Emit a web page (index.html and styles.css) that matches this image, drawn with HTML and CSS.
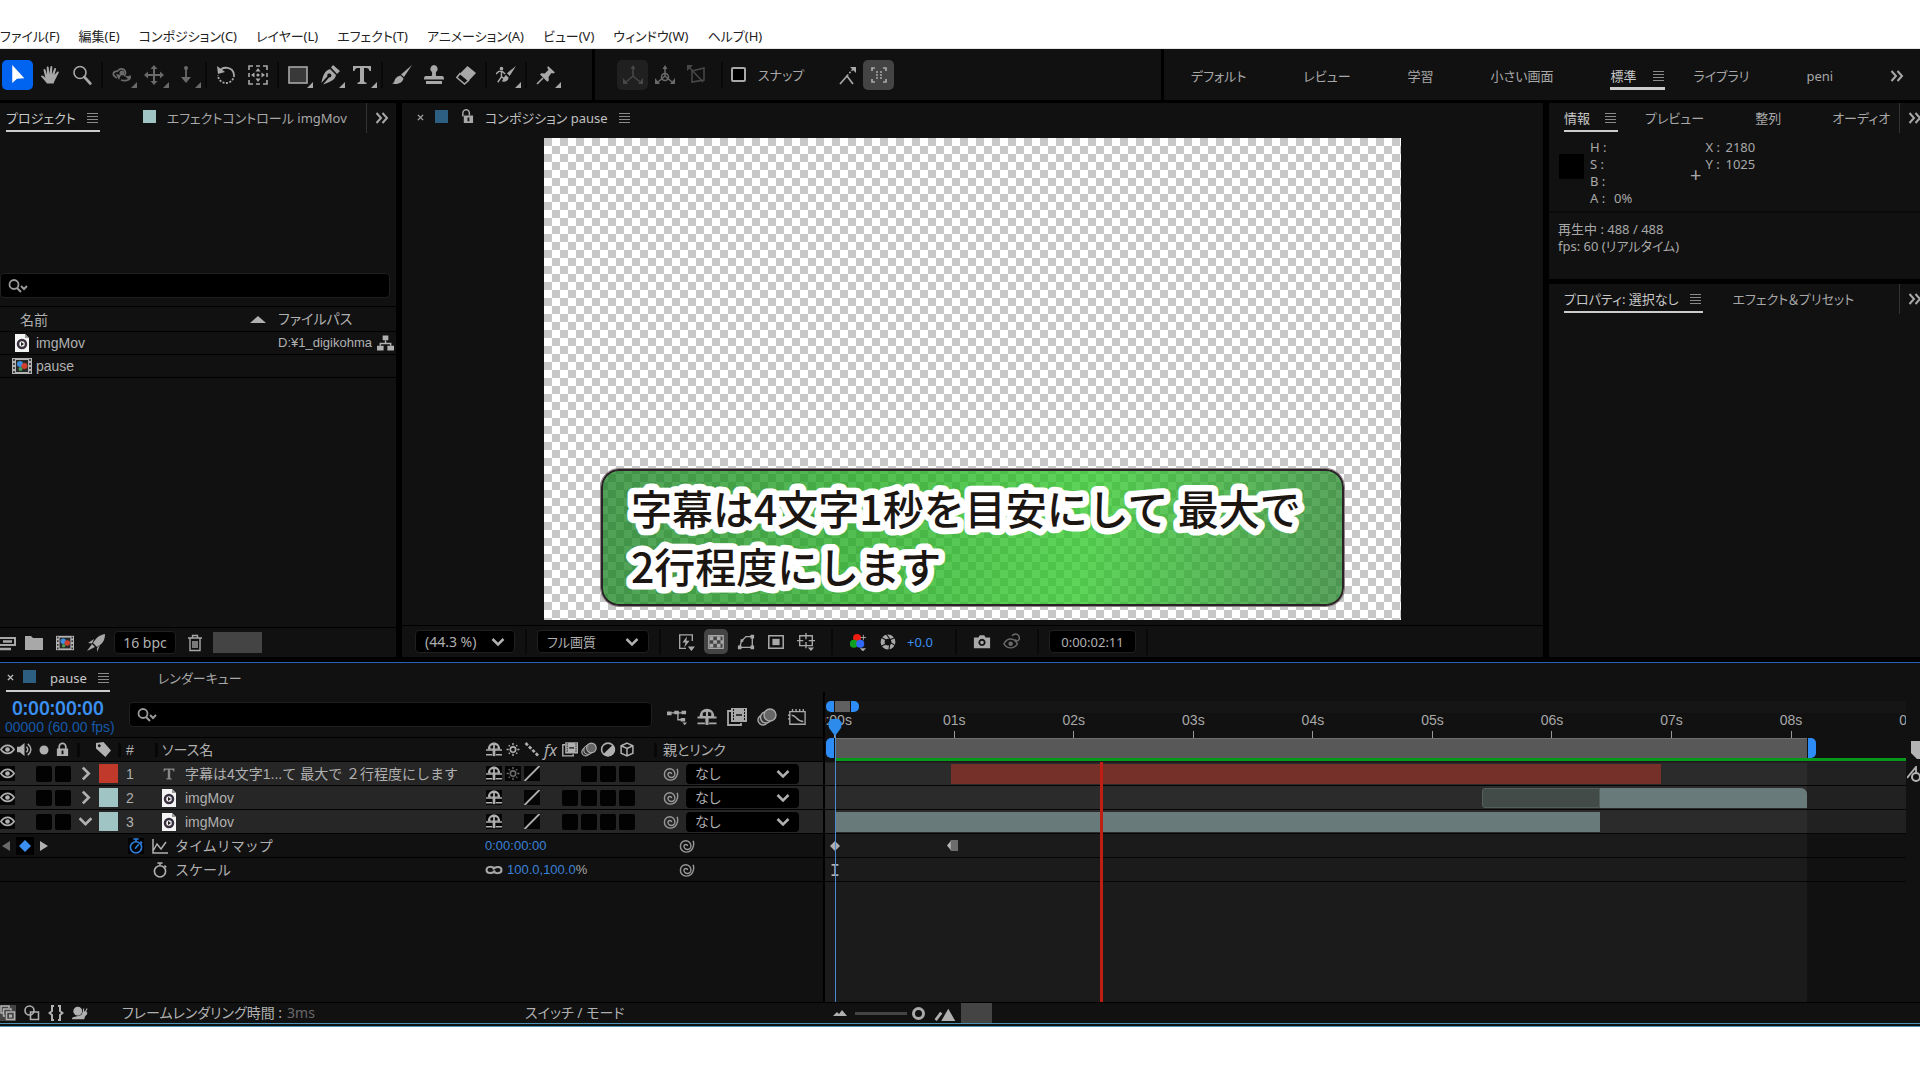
FILE: index.html
```html
<!DOCTYPE html>
<html lang="ja">
<head>
    <meta charset="UTF-8">
    <meta name="viewport" content="width=device-width, initial-scale=1.0">
    <title>pause</title>
    <link rel="stylesheet" href="styles.css">
</head>
<body>

<svg class="defs" aria-hidden="true">
    <symbol id="i-arrow" viewBox="0 0 20 20"><path fill="currentColor" d="M5 1v17l4.500-4 7-.5z"/></symbol>
    <symbol id="i-hand" viewBox="0 0 20 20"><path fill="currentColor" d="M7 18.500C5 16 3 13.500.8 11.200c.8-1.200 2-.8 3.200.3L5.300 12.700 3.500 5c0-1.300 1.500-1.400 1.900-.3L7 9.500 6.700 2.500c0-1.400 1.800-1.400 2 0L9.400 9l1-7.300c.3-1.200 2-1 1.900.4L11.900 9.400l2.400-5.800c.6-1.100 2-.5 1.700.7L14.400 10l2.800-3.200c.9-.8 2 .1 1.400 1.100-1.500 2.500-2.600 5.500-4.100 8.100l-.9 2.500z"/></symbol>
    <symbol id="i-zoom" viewBox="0 0 20 20"><circle cx="8" cy="7.500" r="6" fill="none" stroke="currentColor" stroke-width="1.600"/><path d="M12.300 12l6 6.500" stroke="currentColor" stroke-width="2.600" stroke-linecap="round"/></symbol>
    <symbol id="i-orbit" viewBox="0 0 20 20"><g fill="none" stroke="currentColor" stroke-width="1.700"><path d="M5 13C-1 10 1 6 6 6.200M9 15c6 2 11-1 8.500-4.500"/><path d="M6 6a4 4 0 1 1 6 5"/></g><path fill="currentColor" d="M4 9l5 1-2 5zM13 11h6l-2 4z"/><circle cx="10" cy="8" r="2.500" fill="currentColor"/></symbol>
    <symbol id="i-pan" viewBox="0 0 20 20"><path d="M10 3v14M3 10h14" stroke="currentColor" stroke-width="2"/><path fill="currentColor" d="M10 0l3.500 4h-7zM10 20l3.500-4h-7zM0 10l4-3.500v7zM20 10l-4-3.500v7z"/></symbol>
    <symbol id="i-dolly" viewBox="0 0 20 20"><circle cx="10" cy="3" r="2" fill="currentColor"/><path d="M10 3v11" stroke="currentColor" stroke-width="1.800"/><path fill="currentColor" d="M5 12h10l-5 6z"/></symbol>
    <symbol id="i-rotate" viewBox="0 0 20 20"><path d="M3 7A8 8 0 0 1 18 10" fill="none" stroke="currentColor" stroke-width="1.800"/><path d="M18 10A8 8 0 0 1 2 10" fill="none" stroke="currentColor" stroke-width="1.800" stroke-dasharray="2 1.500"/><path fill="currentColor" d="M1 1l1 8 7-2z"/></symbol>
    <symbol id="i-anchor" viewBox="0 0 20 20"><path d="M1 5V1h4M8 1h4M15 1h4v4M19 8v4M19 15v4h-4M12 19H8M5 19H1v-4M1 12V8" fill="none" stroke="currentColor" stroke-width="1.600"/><path fill="currentColor" d="M10 3l2.500 3.500h-5zM10 17l2.500-3.500h-5zM3 10l3.500-2.500v5zM17 10l-3.500-2.500v5z"/><circle cx="10" cy="10" r="1.600" fill="currentColor"/></symbol>
    <symbol id="i-rect" viewBox="0 0 20 20"><rect x="1" y="2" width="18" height="16" fill="#393939" stroke="currentColor" stroke-width="1.600"/></symbol>
    <symbol id="i-pen" viewBox="0 0 20 20"><path fill="currentColor" fill-rule="evenodd" d="M13 0l7 6-3 3-6-6.500zM10 4l6 6c-1 5-5 6.500-13 9.500l6-7a2 2 0 1 0-1.500-1.300L1.300 18C3 11 4 6 10 4z"/></symbol>
    <symbol id="i-type" viewBox="0 0 20 20"><path fill="currentColor" d="M1 1h18v5h-1.500C17 3.500 16 3 12 3v12.500c0 1.500 1 2 2.500 2V19h-9v-1.500C7 17.500 8 17 8 15.500V3C4 3 3 3.500 2.500 6H1z"/></symbol>
    <symbol id="i-brush" viewBox="0 0 20 20"><path fill="currentColor" d="M20 0L12 12 9 9.500zM8.500 10.500l3 2.700C11 17.500 6 20 0 18.500c3-1 2-3 3.500-5 1.300-1.700 3-2.300 5-3z"/></symbol>
    <symbol id="i-stamp" viewBox="0 0 20 20"><path fill="currentColor" d="M10 0a3.800 3.800 0 0 1 2.500 6.500c-1 1-.7 3.500-.2 4.500H18c1.500 0 2 1 2 3.500H0C0 12 .5 11 2 11h5.700c.5-1 .8-3.500-.2-4.500A3.800 3.800 0 0 1 10 0zM2 16h16v3H2z"/></symbol>
    <symbol id="i-eraser" viewBox="0 0 20 20"><path fill="currentColor" d="M11.500 1L20 8l-7.500 8L4 8.500z"/><path d="M4 8.500L.8 12.500 8.500 19l4-3.500z" fill="none" stroke="currentColor" stroke-width="1.500"/></symbol>
    <symbol id="i-roto" viewBox="0 0 22 20"><path fill="currentColor" d="M22 0l-7 11-3-3zM11 10l3 3c-1 4-4 5-8 4 2-1 2-5 5-7z"/><circle cx="6" cy="3" r="2" fill="currentColor"/><path d="M0 9l3-3h4l3 3M6 6v6l-4 6M6 12l3 2" fill="none" stroke="currentColor" stroke-width="1.600"/></symbol>
    <symbol id="i-pin" viewBox="0 0 20 20"><path fill="currentColor" d="M12 1l7 6.500-2 1-1.500-.5-3 4 .3 3.500-1.500 1.200L4 9.500l1.300-1.300 3.500.2 3.700-3.600L11.300 3z"/><path d="M7 13l-6 6" stroke="currentColor" stroke-width="1.600"/></symbol>
    <symbol id="i-axis" viewBox="0 0 20 20"><path d="M10 2v9l-7 6M10 11l7 6" fill="none" stroke="currentColor" stroke-width="1.500"/><path fill="currentColor" d="M10 0l2.500 4h-5zM0 19v-6l5 6zM20 19v-6l-5 6z"/></symbol>
    <symbol id="i-axis-world" viewBox="0 0 20 20"><use href="#i-axis"/><circle cx="10" cy="12" r="3.500" fill="none" stroke="currentColor" stroke-width="1.500"/></symbol>
    <symbol id="i-axis-view" viewBox="0 0 20 20"><path d="M2 2l14 15M5 6l12-3v12L5 17z" fill="none" stroke="currentColor" stroke-width="1.500"/><path fill="currentColor" d="M0 0h6L0 6z"/></symbol>
    <symbol id="i-snap" viewBox="0 0 20 20"><path d="M3 19l7-8 6 8" fill="none" stroke="currentColor" stroke-width="1.700"/><path d="M10 11l6-7" stroke="currentColor" stroke-width="1.500" stroke-dasharray="2 1.500"/><path fill="currentColor" d="M13 2h6v6z"/></symbol>
    <symbol id="i-snapbox" viewBox="0 0 20 20"><path d="M3 6V3h3M14 3h3v3M17 14v3h-3M6 17H3v-3" fill="none" stroke="currentColor" stroke-width="1.700"/><path d="M7 7h2M11 7h2M7 10h2M11 10h2M7 13h2M11 13h2" stroke="currentColor" stroke-width="1.500"/></symbol>
    <symbol id="i-menu" viewBox="0 0 12 12"><path d="M0 1.500h11M0 4.500h11M0 7.500h11M0 10.500h11" stroke="currentColor"/></symbol>
    <symbol id="i-more" viewBox="0 0 14 12"><path d="M1.500 1l4.500 5-4.500 5M7.500 1L12 6l-4.500 5" fill="none" stroke="currentColor" stroke-width="2"/></symbol>
    <symbol id="i-x" viewBox="0 0 8 8"><path d="M1 1l6 6M7 1L1 7" stroke="currentColor" stroke-width="1.500"/></symbol>
    <symbol id="i-unlock" viewBox="0 0 14 16"><path fill="currentColor" fill-rule="evenodd" d="M3 7h10v8H3zM7 9v4h2V9z"/><path d="M2 8V4.500a3.500 3.500 0 0 1 7-.5v3" fill="none" stroke="currentColor" stroke-width="1.600"/></symbol>
    <symbol id="i-lock" viewBox="0 0 14 16"><path fill="currentColor" fill-rule="evenodd" d="M1 7h12v8H1zM6 9v4h2V9z"/><path d="M3.500 8V5a3.500 3.500 0 0 1 7 0v3" fill="none" stroke="currentColor" stroke-width="1.800"/></symbol>
    <symbol id="i-search" viewBox="0 0 20 14"><circle cx="6" cy="5.500" r="4.500" fill="none" stroke="currentColor" stroke-width="1.800"/><path d="M9 9l4 4M13 7l3 3 3-3" fill="none" stroke="currentColor" stroke-width="2"/></symbol>
    <symbol id="i-chev" viewBox="0 0 14 10"><path d="M1.500 2L7 7.500 12.500 2" fill="none" stroke="currentColor" stroke-width="2.500"/></symbol>
    <symbol id="i-right" viewBox="0 0 14 14"><path d="M4.500 1.500L10 7l-5.500 5.500" fill="none" stroke="currentColor" stroke-width="2.500"/></symbol>
    <symbol id="i-up" viewBox="0 0 16 8"><path fill="currentColor" d="M8 0l8 7H0z"/></symbol>
    <symbol id="i-mov" viewBox="0 0 14 18"><path fill="#f4f4f4" d="M0 0h10l4 4v14H0z"/><path fill="#999" d="M10 0v4h4z"/><circle cx="7" cy="10" r="4" fill="#f4f4f4" stroke="#3a3040" stroke-width="2.500"/><path fill="#222" d="M6 8v4l3-2z"/></symbol>
    <symbol id="i-comp" viewBox="0 0 20 16"><path fill="#b4b4b4" d="M0 0h20v16H0z"/><path d="M2 1v15M18 1v15" stroke="#222" stroke-width="1.500" stroke-dasharray="2 2"/><path fill="#282828" d="M4 2h12v12H4z"/><circle cx="8" cy="6" r="3" fill="#3c8ee0"/><circle cx="12.500" cy="8" r="3" fill="#d0402c"/><circle cx="8.500" cy="11" r="2" fill="#4a9a58"/></symbol>
    <symbol id="i-tree" viewBox="0 0 18 16"><path fill="currentColor" d="M6 0h6v5H6zM0 11h7v5H0zM11 11h7v5h-7z"/><path d="M9 5v3.500M3.500 11V8.500h11V11" fill="none" stroke="currentColor" stroke-width="1.500"/></symbol>
    <symbol id="i-interpret" viewBox="0 0 18 18"><path d="M0 4h15v7H0" fill="none" stroke="currentColor" stroke-width="2"/><path d="M3 7.500h9M0 15h11" fill="none" stroke="currentColor" stroke-width="2.500"/></symbol>
    <symbol id="i-folder" viewBox="0 0 18 14"><path fill="currentColor" d="M0 0h6l2 2h10v12H0z"/></symbol>
    <symbol id="i-rocket" viewBox="0 0 18 18"><path fill="currentColor" d="M18 0c0 7-3 10-8 13l-4-4C9 4 12 1 18 0zM5 10l3 3-8 4zM7 5L1 9l4 .5zM13 11l-3 3v4z"/></symbol>
    <symbol id="i-trash" viewBox="0 0 14 18"><path d="M0 4h14M4.500 4V1.500h5V4M2 4v12.500h10V4M5 7v7M7 7v7M9 7v7" fill="none" stroke="currentColor" stroke-width="1.400"/></symbol>
    <symbol id="i-fast" viewBox="0 0 20 20"><path d="M17 9V2H3v15h7" fill="none" stroke="currentColor" stroke-width="1.500"/><path fill="currentColor" d="M11 4l-5 6.500h3.500L8 16l6-7.500h-3.500zM12 15h8l-4 5z"/></symbol>
    <symbol id="i-checker" viewBox="0 0 20 20"><path d="M2 3h16v14H2z" fill="none" stroke="currentColor" stroke-width="1.500"/><path fill="currentColor" d="M3 4h4v4H3zM11 4h4v4h-4zM7 8h4v4H7zM15 8h3v4h-3zM3 12h4v4H3zM11 12h4v4h-4z"/></symbol>
    <symbol id="i-mask" viewBox="0 0 20 20"><path d="M3 16l2-7 5-5h7v12z" fill="none" stroke="currentColor" stroke-width="1.500"/><path fill="currentColor" d="M1 14h4v4H1zM15 14h4v4h-4zM15 2h4v4h-4zM4 7h3v3H4z"/></symbol>
    <symbol id="i-roi" viewBox="0 0 20 20"><path d="M2 3h16v14H2z" fill="none" stroke="currentColor" stroke-width="1.700"/><path fill="currentColor" d="M6 6.500h8v7H6z"/></symbol>
    <symbol id="i-guides" viewBox="0 0 20 20"><path d="M3 3h14v11H3zM10 0v7M10 10v7M0 8.500h7M13 8.500h7" fill="none" stroke="currentColor" stroke-width="1.500"/><path fill="currentColor" d="M12 16h7l-3.500 4z"/></symbol>
    <symbol id="i-rgb" viewBox="0 0 20 20"><circle cx="9" cy="5.500" r="4.500" fill="#f01c10"/><circle cx="5.500" cy="12" r="4.500" fill="#10a020"/><circle cx="12.500" cy="12" r="4.500" fill="#3268f8"/><path d="M16 2v6M13 5h6" stroke="#aaa"/><path fill="currentColor" d="M12 17h7l-3.500 3.500z"/></symbol>
    <symbol id="i-shutter" viewBox="0 0 20 20"><circle cx="10" cy="10" r="6" fill="none" stroke="currentColor" stroke-width="4.500"/><path d="M8 1l5 7M18 5l-7 3M18 14l-6-4M11 19l1-7M2 15l6-3M3 5l5 3" stroke="#111" stroke-width="1.200"/></symbol>
    <symbol id="i-camera" viewBox="0 0 20 20"><path fill="currentColor" fill-rule="evenodd" d="M1 5h5l1.500-2.500h5L14 5h5v12H1zM10 6.500a4 4 0 1 0 .01 0zM10 8.500a2 2 0 1 1-.01 0z"/></symbol>
    <symbol id="i-show" viewBox="0 0 20 20"><path d="M1 12c4-7 11-7 15 0-4 6-11 6-15 0z" fill="none" stroke="currentColor" stroke-width="1.600"/><circle cx="8.500" cy="12" r="2.500" fill="currentColor"/><path d="M10 3c4-4 9-1 8 4-2 3-4 2-4 0" fill="none" stroke="currentColor" stroke-width="1.600"/></symbol>
    <symbol id="i-flow" viewBox="0 0 22 18"><path fill="currentColor" d="M0 3h5v4H0zM8 2h5v4H8zM16 2h5v4h-5zM15 10h5v4h-5zM17 15h5l-2.500 3z"/><path d="M2 4.500h17M12 5v7h4" fill="none" stroke="currentColor" stroke-width="1.500"/></symbol>
    <symbol id="i-shy" viewBox="0 0 18 17"><path fill="currentColor" fill-rule="evenodd" d="M2 8.500C2-2 16-2 16 8.500zM5 4.500v3h3v-4zM10 3.500v4h3v-3z"/><path d="M0 9h18M0 14.500h7M11 14.500h7" stroke="currentColor" stroke-width="1.800"/><path d="M9 8v8" stroke="currentColor" stroke-width="3"/></symbol>
    <symbol id="i-blend" viewBox="0 0 20 18"><path d="M4 3H1v14h13v-2" fill="none" stroke="currentColor" stroke-width="1.800"/><path fill="currentColor" d="M4 0h16v14H4z"/><path d="M6.500 1v12M17.500 1v12" stroke="#111" stroke-dasharray="2 1"/><path d="M9 7h6" stroke="#111" stroke-width="1.500"/></symbol>
    <symbol id="i-blur" viewBox="0 0 20 18"><g fill="#333" stroke="currentColor" stroke-width="1.400"><circle cx="6" cy="12" r="5"/><circle cx="9" cy="9.500" r="5.500"/><circle cx="13" cy="7" r="6" fill="#666"/></g></symbol>
    <symbol id="i-graph" viewBox="0 0 20 20"><path d="M2 4h17v14H2zM5 1v3M9 1v3M13 1v3M17 1v3M0 8h2M0 12h2" fill="none" stroke="currentColor" stroke-width="1.500"/><path d="M4 8c6 0 5 7 13 7" fill="none" stroke="currentColor" stroke-width="1.500"/></symbol>
    <symbol id="i-eye" viewBox="0 0 16 12"><path d="M1 6c3.500-6 10.500-6 14 0-3.500 5.500-10.500 5.500-14 0z" fill="none" stroke="currentColor" stroke-width="1.800"/><circle cx="8" cy="6" r="2.500" fill="currentColor"/></symbol>
    <symbol id="i-audio" viewBox="0 0 16 14"><path fill="currentColor" d="M0 4h3l5-4v14l-5-4H0z"/><path d="M10 4c2 2 2 4 0 6M11.500 1c4.500 4 4.500 8 0 12" fill="none" stroke="currentColor" stroke-width="1.500"/></symbol>
    <symbol id="i-dot" viewBox="0 0 10 10"><circle cx="5" cy="5" r="4.500" fill="currentColor"/></symbol>
    <symbol id="i-tag" viewBox="0 0 16 16"><path fill="currentColor" fill-rule="evenodd" d="M0 1l8-1 8 9-6 7-10-9zM3.500 2.500a1.500 1.500 0 1 0 .01 0z"/></symbol>
    <symbol id="i-sun" viewBox="0 0 14 14"><circle cx="7" cy="7" r="2.500" fill="none" stroke="currentColor" stroke-width="1.500"/><path d="M7 1v2M7 11v2M1 7h2M11 7h2M3 3l1 1M10 10l1 1M11 3l-1 1M4 10l-1 1" stroke="currentColor" stroke-width="1.300"/></symbol>
    <symbol id="i-quality" viewBox="0 0 14 14"><path d="M1 1l12 12" stroke="currentColor" stroke-width="2.500" stroke-dasharray="3 1.500"/></symbol>
    <symbol id="i-slash" viewBox="0 0 14 14"><path d="M0 14L14 0" stroke="currentColor" stroke-width="1.800"/></symbol>
    <symbol id="i-adjust" viewBox="0 0 14 14"><circle cx="7" cy="7" r="6" fill="none" stroke="currentColor" stroke-width="1.500"/><path fill="currentColor" d="M11.500 2.500a6 6 0 0 1-9 9z"/></symbol>
    <symbol id="i-cube" viewBox="0 0 14 14"><path d="M7 1l5.500 2.500v7L7 13l-5.500-2.500v-7zM1.500 3.500L7 6l5.500-2.500M7 6v7" fill="none" stroke="currentColor" stroke-width="1.400"/></symbol>
    <symbol id="i-whip" viewBox="0 0 18 16"><path d="M16 2C18 8 15 15 8 15A6.500 6.500 0 0 1 1.500 8A6 6 0 0 1 13.500 8A3.800 3.800 0 0 1 5.500 8A2.200 2.200 0 0 1 9.800 8" fill="none" stroke="currentColor" stroke-width="1.600"/></symbol>
    <symbol id="i-left" viewBox="0 0 8 10"><path fill="currentColor" d="M8 0v10L0 5z"/></symbol>
    <symbol id="i-play" viewBox="0 0 8 10"><path fill="currentColor" d="M0 0v10l8-5z"/></symbol>
    <symbol id="i-key" viewBox="0 0 12 12"><path fill="currentColor" d="M6 0l6 6-6 6-6-6z"/></symbol>
    <symbol id="i-watch" viewBox="0 0 16 18"><circle cx="8" cy="10.500" r="6.300" fill="none" stroke="currentColor" stroke-width="1.800"/><path d="M5 1.200h6M8 1v3M13 4l2 2" stroke="currentColor" stroke-width="1.800"/></symbol>
    <symbol id="i-watch-on" viewBox="0 0 16 18"><use href="#i-watch"/><path d="M7 12l4-5" stroke="currentColor" stroke-width="1.800"/></symbol>
    <symbol id="i-curve" viewBox="0 0 16 16"><path d="M1 1v14h15M1 13l4-7 4 5 5-7" fill="none" stroke="currentColor" stroke-width="1.500"/></symbol>
    <symbol id="i-link" viewBox="0 0 18 10"><path d="M10 5.500C8 9 1.500 9 1.500 5S8 1 10 4M8 4.500C10 1 16.500 1 16.500 5S10 9 8 6" fill="none" stroke="currentColor" stroke-width="2"/></symbol>
    <symbol id="i-layers" viewBox="0 0 16 16"><path d="M3 8H1V1h8v2M5 11H3.500V4H11v1.500M6.500 7h8v7.500h-8z" fill="none" stroke="currentColor" stroke-width="1.500"/><path fill="currentColor" d="M9 9.500h3v3H9z"/></symbol>
    <symbol id="i-modes" viewBox="0 0 16 16"><circle cx="5.500" cy="5.500" r="4.500" fill="none" stroke="currentColor" stroke-width="1.600"/><path d="M6.500 7h8v7.500h-8z" fill="none" stroke="currentColor" stroke-width="1.600"/></symbol>
    <symbol id="i-braces" viewBox="0 0 16 16"><path d="M6 1H4v5L1.500 8 4 10v5h2M10 1h2v5l2.500 2-2.500 2v5h-2" fill="none" stroke="currentColor" stroke-width="2"/></symbol>
    <symbol id="i-snail" viewBox="0 0 18 16"><circle cx="6.500" cy="6" r="5" fill="currentColor"/><path fill="currentColor" d="M0 15c0-3 4-3 8-4 3 0 3-2 4-4 3-2 6 0 5 2s-3 2-3 6z"/><path d="M13 8V3M15 7l2-4" stroke="currentColor" stroke-width="1.300"/></symbol>
    <symbol id="i-mount" viewBox="0 0 22 16"><path fill="currentColor" d="M7 16L14.500 3 22 16z"/><path d="M1 15l6-8" stroke="currentColor" stroke-width="3"/></symbol>
    <symbol id="i-hills" viewBox="0 0 14 8"><path fill="currentColor" d="M0 7l4-4 2 2 3-4 5 6z"/></symbol>
    <symbol id="i-ibeam" viewBox="0 0 10 14"><path d="M1 1h8M1 13h8M5 1v12" stroke="currentColor" stroke-width="1.800"/></symbol>
    <symbol id="i-ease" viewBox="0 0 12 14"><path fill="#b8b8b8" d="M0 7l5-6v12z"/><path fill="#6c6c6c" d="M4 1h8v12H4z"/></symbol>
    <symbol id="i-head" viewBox="0 0 14 17"><path fill="#2d8ceb" d="M3 0h8l3 4-1 5-6 8-6-8-1-5z"/></symbol>
    <symbol id="i-marker" viewBox="0 0 10 18"><path fill="currentColor" d="M0 0h10v18H6L0 12z"/></symbol>
    <symbol id="i-spin" viewBox="0 0 14 16"><path d="M0 12L9 1v5" fill="none" stroke="currentColor" stroke-width="1.800"/><circle cx="9" cy="11" r="4" fill="none" stroke="currentColor" stroke-width="2"/></symbol>
</svg>

<header class="menubar">
    <nav class="menus">
        <button>ファイル(F)</button>
        <button>編集(E)</button>
        <button>コンポジション(C)</button>
        <button>レイヤー(L)</button>
        <button>エフェクト(T)</button>
        <button>アニメーション(A)</button>
        <button>ビュー(V)</button>
        <button>ウィンドウ(W)</button>
        <button>ヘルプ(H)</button>
    </nav>
</header>

<div class="toolbar">
    <div class="tools">
        <button class="tool active" aria-label="選択"><svg><use href="#i-arrow"/></svg></button>
        <button class="tool" aria-label="手のひら"><svg><use href="#i-hand"/></svg></button>
        <button class="tool" aria-label="ズーム"><svg><use href="#i-zoom"/></svg></button>
        <i class="sep"></i>
        <button class="tool dim more" aria-label="周回"><svg><use href="#i-orbit"/></svg></button>
        <button class="tool dim more" aria-label="パン"><svg><use href="#i-pan"/></svg></button>
        <button class="tool dim more" aria-label="ドリー"><svg><use href="#i-dolly"/></svg></button>
        <i class="sep"></i>
        <button class="tool" aria-label="回転"><svg><use href="#i-rotate"/></svg></button>
        <button class="tool" aria-label="アンカーポイント"><svg><use href="#i-anchor"/></svg></button>
        <i class="sep"></i>
        <button class="tool more" aria-label="長方形"><svg><use href="#i-rect"/></svg></button>
        <button class="tool more" aria-label="ペン"><svg><use href="#i-pen"/></svg></button>
        <button class="tool more" aria-label="文字"><svg><use href="#i-type"/></svg></button>
        <i class="sep"></i>
        <button class="tool" aria-label="ブラシ"><svg><use href="#i-brush"/></svg></button>
        <button class="tool" aria-label="スタンプ"><svg><use href="#i-stamp"/></svg></button>
        <button class="tool" aria-label="消しゴム"><svg><use href="#i-eraser"/></svg></button>
        <i class="sep"></i>
        <button class="tool more" aria-label="ロトブラシ"><svg><use href="#i-roto"/></svg></button>
        <i class="sep"></i>
        <button class="tool more" aria-label="パペットピン"><svg><use href="#i-pin"/></svg></button>
    </div>
    <div class="snapping">
        <button class="tool faint boxed" aria-label="ローカル軸"><svg><use href="#i-axis"/></svg></button>
        <button class="tool dim" aria-label="ワールド軸"><svg><use href="#i-axis-world"/></svg></button>
        <button class="tool faint" aria-label="ビュー軸"><svg><use href="#i-axis-view"/></svg></button>
        <i class="sep"></i>
        <label class="snap"><input type="checkbox"> スナップ</label>
        <button class="tool" aria-label="スナップ延長"><svg><use href="#i-snap"/></svg></button>
        <button class="tool lit" aria-label="スナップ範囲"><svg><use href="#i-snapbox"/></svg></button>
    </div>
    <nav class="workspaces">
        <button>デフォルト</button>
        <button>レビュー</button>
        <button>学習</button>
        <button>小さい画面</button>
        <button class="current">標準 <svg class="ham"><use href="#i-menu"/></svg></button>
        <button>ライブラリ</button>
        <button>peni</button>
        <button aria-label="その他"><svg class="chevs"><use href="#i-more"/></svg></button>
    </nav>
</div>

<main class="panels">
    <section class="panel project">
        <div class="tabs">
            <button class="tab current">プロジェクト <svg class="ham"><use href="#i-menu"/></svg></button>
            <button class="tab fx"><i class="swatch aqua"></i>エフェクトコントロール imgMov</button>
            <button class="overflow" aria-label="その他"><svg class="chevs"><use href="#i-more"/></svg></button>
        </div>
        <div class="preview"></div>
        <label class="search"><svg><use href="#i-search"/></svg><input type="text" aria-label="プロジェクト検索"></label>
        <table class="files">
            <thead>
                <tr><th class="name"><span>名前</span><svg><use href="#i-up"/></svg></th><th>ファイルパス</th></tr>
            </thead>
            <tbody>
                <tr><td><span><svg class="mov"><use href="#i-mov"/></svg>imgMov</span></td><td class="path"><span><em>D:¥1_digikohma</em><svg class="tree"><use href="#i-tree"/></svg></span></td></tr>
                <tr><td><span><svg class="compicon"><use href="#i-comp"/></svg>pause</span></td><td></td></tr>
            </tbody>
        </table>
        <div class="panel-foot">
            <button aria-label="フッテージを変換"><svg><use href="#i-interpret"/></svg></button>
            <button aria-label="新規フォルダー"><svg><use href="#i-folder"/></svg></button>
            <button aria-label="新規コンポジション"><svg><use href="#i-comp"/></svg></button>
            <button aria-label="プロジェクト設定"><svg><use href="#i-rocket"/></svg></button>
            <button class="field bpc">16 bpc</button>
            <button aria-label="削除"><svg><use href="#i-trash"/></svg></button>
            <i class="thumb"></i>
        </div>
    </section>

    <section class="panel comp">
        <div class="tabs">
            <button class="close" aria-label="閉じる"><svg><use href="#i-x"/></svg></button>
            <i class="swatch blue"></i>
            <svg class="unlock"><use href="#i-unlock"/></svg>
            <button class="tab bright">コンポジション pause <svg class="ham"><use href="#i-menu"/></svg></button>
        </div>
        <div class="viewer">
            <div class="frame">
                <div class="subtitle">
                    <svg>
                        <text x="28" y="54">字幕は4文字1秒を目安にして 最大で</text>
                        <text x="28" y="112">2行程度にします</text>
                    </svg>
                </div>
            </div>
        </div>
        <div class="panel-foot">
            <span class="select zoomlevel"><select aria-label="拡大率"><option>(44.3 %)</option></select><svg><use href="#i-chev"/></svg></span>
            <i class="sep"></i>
            <span class="select quality"><select aria-label="解像度"><option>フル画質</option></select><svg><use href="#i-chev"/></svg></span>
            <i class="sep"></i>
            <div class="icons">
                <button aria-label="高速プレビュー"><svg><use href="#i-fast"/></svg></button>
                <button class="lit" aria-label="透明グリッド"><svg><use href="#i-checker"/></svg></button>
                <button aria-label="マスク"><svg><use href="#i-mask"/></svg></button>
                <button aria-label="目標範囲"><svg><use href="#i-roi"/></svg></button>
                <button aria-label="グリッドとガイド"><svg><use href="#i-guides"/></svg></button>
            </div>
            <i class="sep"></i>
            <div class="icons">
                <button aria-label="チャンネル"><svg><use href="#i-rgb"/></svg></button>
                <button aria-label="露出をリセット"><svg><use href="#i-shutter"/></svg></button>
                <button class="exposure">+0.0</button>
            </div>
            <i class="sep"></i>
            <div class="icons">
                <button aria-label="スナップショット"><svg><use href="#i-camera"/></svg></button>
                <button class="dim" aria-label="スナップショットを表示"><svg><use href="#i-show"/></svg></button>
            </div>
            <i class="sep"></i>
            <button class="field time">0:00:02:11</button>
            <i class="sep"></i>
        </div>
    </section>

    <div class="side">
        <section class="panel info">
            <div class="tabs">
                <button class="tab current">情報 <svg class="ham"><use href="#i-menu"/></svg></button>
                <button class="tab">プレビュー</button>
                <button class="tab">整列</button>
                <button class="tab">オーディオ</button>
                <button class="overflow" aria-label="その他"><svg class="chevs"><use href="#i-more"/></svg></button>
            </div>
            <div class="readout">
                <i class="sample"></i>
                <dl>
                    <dt>H :</dt><dd></dd>
                    <dt>S :</dt><dd></dd>
                    <dt>B :</dt><dd></dd>
                    <dt>A :</dt><dd>0%</dd>
                </dl>
                <span class="cross">+</span>
                <dl>
                    <dt>X :</dt><dd>2180</dd>
                    <dt>Y :</dt><dd>1025</dd>
                </dl>
            </div>
            <p class="playing">再生中 : 488 / 488<br>fps: 60 (リアルタイム)</p>
        </section>
        <section class="panel props">
            <div class="tabs">
                <button class="tab current">プロパティ: 選択なし <svg class="ham"><use href="#i-menu"/></svg></button>
                <button class="tab">エフェクト＆プリセット</button>
                <button class="overflow" aria-label="その他"><svg class="chevs"><use href="#i-more"/></svg></button>
            </div>
        </section>
    </div>
</main>

<section class="timeline">
    <div class="tabs">
        <div class="tabgroup">
            <button class="close" aria-label="閉じる"><svg><use href="#i-x"/></svg></button>
            <i class="swatch blue"></i>
            <button class="tab">pause <svg class="ham"><use href="#i-menu"/></svg></button>
        </div>
        <button class="tab">レンダーキュー</button>
    </div>

    <div class="tl-body">
        <div class="layers">
            <div class="controls">
                <div class="clock"><strong>0:00:00:00</strong><span>00000 (60.00 fps)</span></div>
                <label class="search"><svg><use href="#i-search"/></svg><input type="text" aria-label="レイヤー検索"></label>
                <div class="icons">
                    <button aria-label="フローチャート"><svg><use href="#i-flow"/></svg></button>
                    <button aria-label="シャイ"><svg><use href="#i-shy"/></svg></button>
                    <button aria-label="フレームブレンド"><svg><use href="#i-blend"/></svg></button>
                    <button aria-label="モーションブラー"><svg><use href="#i-blur"/></svg></button>
                    <button aria-label="グラフエディター"><svg><use href="#i-graph"/></svg></button>
                </div>
            </div>
            <div class="row head">
                <svg><use href="#i-eye"/></svg>
                <svg><use href="#i-audio"/></svg>
                <svg class="small"><use href="#i-dot"/></svg>
                <svg><use href="#i-lock"/></svg>
                <i class="bar"></i>
                <svg class="tag"><use href="#i-tag"/></svg>
                <span class="num bar-left">#</span>
                <span class="source bar-left">ソース名</span>
                <div class="switches">
                    <svg><use href="#i-shy"/></svg>
                    <svg><use href="#i-sun"/></svg>
                    <svg><use href="#i-quality"/></svg>
                    <b>fx</b>
                    <svg><use href="#i-blend"/></svg>
                    <svg><use href="#i-blur"/></svg>
                    <svg><use href="#i-adjust"/></svg>
                    <svg><use href="#i-cube"/></svg>
                </div>
                <span class="parent bar-left">親とリンク</span>
            </div>
            <div class="row layer">
                <svg class="on"><use href="#i-eye"/></svg>
                <i></i><i class="box"></i><i class="box"></i>
                <svg><use href="#i-right"/></svg>
                <i class="label red"></i>
                <span class="num">1</span>
                <span class="source"><svg class="tee"><use href="#i-type"/></svg>字幕は4文字1...て 最大で ２行程度にします</span>
                <div class="switches">
                    <svg class="on"><use href="#i-shy"/></svg><svg class="on dim"><use href="#i-sun"/></svg><svg class="on"><use href="#i-slash"/></svg>
                    <i></i><i></i><i class="box"></i><i class="box"></i><i class="box"></i>
                </div>
                <span class="parent"><svg><use href="#i-whip"/></svg><span class="select"><select aria-label="親 1"><option>なし</option></select><svg><use href="#i-chev"/></svg></span></span>
            </div>
            <div class="row layer">
                <svg class="on"><use href="#i-eye"/></svg>
                <i></i><i class="box"></i><i class="box"></i>
                <svg><use href="#i-right"/></svg>
                <i class="label aqua"></i>
                <span class="num">2</span>
                <span class="source"><svg><use href="#i-mov"/></svg>imgMov</span>
                <div class="switches">
                    <svg class="on"><use href="#i-shy"/></svg><i></i><svg class="on"><use href="#i-slash"/></svg>
                    <i></i><i class="box"></i><i class="box"></i><i class="box"></i><i class="box"></i>
                </div>
                <span class="parent"><svg><use href="#i-whip"/></svg><span class="select"><select aria-label="親 2"><option>なし</option></select><svg><use href="#i-chev"/></svg></span></span>
            </div>
            <div class="row layer">
                <svg class="on"><use href="#i-eye"/></svg>
                <i></i><i class="box"></i><i class="box"></i>
                <svg><use href="#i-chev"/></svg>
                <i class="label aqua"></i>
                <span class="num">3</span>
                <span class="source"><svg><use href="#i-mov"/></svg>imgMov</span>
                <div class="switches">
                    <svg class="on"><use href="#i-shy"/></svg><i></i><svg class="on"><use href="#i-slash"/></svg>
                    <i></i><i class="box"></i><i class="box"></i><i class="box"></i><i class="box"></i>
                </div>
                <span class="parent"><svg><use href="#i-whip"/></svg><span class="select"><select aria-label="親 3"><option>なし</option></select><svg><use href="#i-chev"/></svg></span></span>
            </div>
            <div class="row prop">
                <span class="keys"><svg class="dim"><use href="#i-left"/></svg><svg class="key"><use href="#i-key"/></svg><svg><use href="#i-play"/></svg></span>
                <span class="watches"><svg class="timed"><use href="#i-watch-on"/></svg><svg><use href="#i-curve"/></svg></span>
                <span>タイムリマップ</span>
                <span class="value">0:00:00:00</span>
                <span><svg><use href="#i-whip"/></svg></span>
            </div>
            <div class="row prop">
                <span></span>
                <span class="watches"><svg><use href="#i-watch"/></svg></span>
                <span>スケール</span>
                <span class="value"><svg><use href="#i-link"/></svg>100.0,100.0<em>%</em></span>
                <span><svg><use href="#i-whip"/></svg></span>
            </div>
        </div>

        <div class="graph">
            <div class="navigator"><i class="cap start"></i><i class="view"></i><i class="cap end"></i></div>
            <div class="ruler">
                <span>0:00s</span><span>01s</span><span>02s</span><span>03s</span><span>04s</span><span>05s</span><span>06s</span><span>07s</span><span>08s</span><span>09s</span>
            </div>
            <div class="workarea"><i class="cap start"></i><i class="area"></i><i class="cap end"></i></div>
            <div class="cached"></div>
            <div class="tracks">
                <div class="track"><i class="clip red" style="margin-left: 10.8%; width: 66.300%"></i></div>
                <div class="track"><i class="clip trimmed" style="margin-left: 60.4%; width: 11%"></i><i class="clip aqua last" style="width: 19.4%"></i></div>
                <div class="track"><i class="clip aqua" style="width: 71.400%"></i></div>
                <div class="track sub"><svg class="k1"><use href="#i-key"/></svg><svg class="k2"><use href="#i-ease"/></svg></div>
                <div class="track sub"><svg class="ibeam"><use href="#i-ibeam"/></svg></div>
                <i class="redline"></i>
            </div>
            <div class="playhead"><svg><use href="#i-head"/></svg></div>
        </div>

        <div class="edge">
            <svg><use href="#i-marker"/></svg>
            <svg><use href="#i-spin"/></svg>
        </div>
    </div>

    <footer class="tl-foot">
        <div class="foot-left">
            <svg class="lit"><use href="#i-layers"/></svg>
            <svg><use href="#i-modes"/></svg>
            <svg><use href="#i-braces"/></svg>
            <svg><use href="#i-snail"/></svg>
            <span class="render">フレームレンダリング時間 : <em>3ms</em></span>
            <button>スイッチ / モード</button>
        </div>
        <div class="foot-right">
            <svg class="far"><use href="#i-hills"/></svg>
            <input type="range" min="0" max="100" value="100" aria-label="ズーム">
            <svg><use href="#i-mount"/></svg>
            <i class="thumb"></i>
        </div>
    </footer>
</section>

</body>
</html>
```

FILE: styles.css
```css
* { box-sizing: border-box; }
body { margin: 0; min-height: 100vh; padding-bottom: 53px; display: flex; flex-direction: column; background: #fff; color: #a8a8a8; font: 13px/18px "Noto Sans", "Noto Sans CJK JP", sans-serif; font-feature-settings: "palt"; }
button, input, select { font: inherit; font-feature-settings: inherit; color: inherit; background: none; border: 0; padding: 0; margin: 0; white-space: nowrap; }
button { display: flex; align-items: center; justify-content: center; }
i, em { font-style: normal; display: block; }
svg { display: block; flex: none; width: 18px; height: 18px; }
.defs { position: absolute; width: 0; height: 0; }
.sep { width: 2px; height: 26px; background: #090909; flex: none; }
.dim { color: #6a6a6a; }
.faint { color: #484848; }
.ham { width: 12px; height: 12px; color: #8a8a8a; }
.chevs { width: 14px; height: 12px; color: #a8a8a8; }
.icons { display: flex; align-items: center; }
.icons button { width: 30px; height: 25px; }
.thumb { background: #444; }

.menubar { height: 49px; padding-top: 27px; border-bottom: 1px solid #e4e6e5; background: #fff; color: #222; }
.menus { display: flex; gap: 19px; height: 18px; align-items: center; }

.toolbar { height: 54px; display: grid; grid-template-columns: 592px 1fr 756px; gap: 3px; background: #000; border-bottom: 3px solid #000; }
.toolbar > * { background: #111; display: flex; align-items: center; }
.tools { padding-left: 2px; }
.tools .sep { margin: 0 3px; }
.tool { width: 31px; height: 30px; margin-right: 1px; border-radius: 5px; position: relative; }
.tool.active { background: #0064f0; color: #fff; }
.tool svg { width: 20px; height: 20px; }
.tool.active svg { width: 21px; height: 21px; }
.more::after { content: ""; position: absolute; right: 0; bottom: 2px; border: 3px solid; border-color: transparent currentColor currentColor transparent; }
.boxed { background: #202020; }
.lit { background: #444; }
.snapping { padding-left: 22px; }
.snapping .sep { margin: 0 8px; }
.snap { display: flex; align-items: center; gap: 12px; width: 100px; font-size: 13px; }
.snap input { appearance: none; width: 15px; height: 15px; border: 2px solid #a8a8a8; border-radius: 2px; background: #000; }
.workspaces { gap: 57px; padding: 3px 0 0 27px; overflow: hidden; }
.workspaces button { height: 28px; }
.workspaces .current { gap: 17px; margin-right: -29px; border-bottom: 3px solid #ccc; color: #c8c8c8; padding-top: 3px; }

.panels { flex: 1; display: grid; grid-template-columns: 396px 1fr 371px; gap: 6px; background: #000; border-bottom: 5px solid #000; }
.panel { background: #111; display: flex; flex-direction: column; min-width: 0; }
.tabs { height: 35px; display: flex; align-items: flex-start; overflow: hidden; flex: none; }
.tab { height: 29px; gap: 11px; flex: none; border-bottom: 2px solid transparent; padding-top: 2px; }
.current { color: #c8c8c8; }
.tab.current { border-color: #ccc; padding-right: 1px; }
.bright { color: #c0c0c0; }
.overflow { margin-left: auto; height: 30px; width: 30px; padding-left: 8px; border-left: 1px solid #333; justify-content: flex-start; }
.swatch { width: 13px; height: 13px; margin-top: 7px; flex: none; }
.aqua { background: #a0c4c4; }
.blue { background: #2d5f82; }
.red { background: #c0392b; }
.close { width: 8px; height: 29px; flex: none; }
.close svg { width: 7px; height: 7px; }

.project .tabs { padding-left: 6px; }
.project .fx { align-items: flex-start; padding-top: 6px; margin-left: 43px; }
.project .fx .swatch { margin-top: 1px; }
.preview { height: 135px; }
.search { display: flex; align-items: center; gap: 6px; height: 25px; padding: 0 7px; background: #000; border: 1px solid #1f1f1f; border-radius: 4px; }
.search svg { width: 20px; height: 14px; color: #999; }
.search input { flex: 1; min-width: 0; }
.project .search { margin-right: 6px; }
.files { margin-top: 8px; width: 100%; border-collapse: collapse; table-layout: fixed; border-top: 1px solid #000; color: #b0b0b0; font-size: 14px; }
.files th { font-weight: normal; text-align: left; height: 25px; padding: 0 0 0 8px; border-bottom: 1px solid #000; }
.files .name { width: 270px; padding-left: 20px; border-right: 0; }
.files .name span, .files .name svg { display: inline-block; vertical-align: middle; }
.files .name svg { width: 16px; height: 8px; margin-left: 202px; }
.files td { height: 23px; padding: 0 0 0 8px; border-bottom: 1px solid #000; font-family: "Liberation Sans", sans-serif; }
.files td:first-child { padding-left: 12px; }
.files td span { display: flex; align-items: center; gap: 4px; }
.files .mov { width: 14px; height: 18px; margin: 0 3px; }
.files .compicon { width: 20px; height: 16px; }
.files .path span { gap: 1px; }
.files em { width: 98px; white-space: nowrap; font-size: 13px; }
.files .tree { width: 17px; height: 16px; }

.panel-foot { height: 30px; display: flex; align-items: center; margin-top: auto; border-top: 1px solid #000; }
.project .panel-foot button { width: 31px; height: 21px; }
.field, .select { background: #000; border: 1px solid #1f1f1f; border-radius: 4px; color: #b0b0b0; }
.project .panel-foot .bpc { width: 62px; height: 23px; margin: 0 3px; font-size: 14px; }
.project .panel-foot button:first-child { width: 18px; }
.project .panel-foot .thumb { width: 49px; height: 21px; margin-left: 3px; }
.select { display: grid; align-items: center; }
.select > * { grid-area: 1 / 1; }
.select select { appearance: none; padding-left: 9px; width: 100%; height: 100%; outline: 0; }
.select svg { width: 14px; height: 10px; justify-self: end; margin-right: 9px; pointer-events: none; }

.comp .tabs { padding-left: 14px; }
.comp .swatch { margin-left: 11px; }
.unlock { width: 13px; height: 15px; margin: 6px 11px 0 13px; }
.viewer { flex: 1; display: flex; justify-content: center; align-items: flex-start; }
.frame { position: relative; width: 75.100%; aspect-ratio: 16 / 9; background: repeating-conic-gradient(#fff 0 25%, #c8c8c8 0 50%) 0 0 / 16px 16px; }
.subtitle { position: absolute; left: 6.600%; right: 6.600%; top: 68.600%; height: 28.600%; border: 2px solid #2a2226; outline: 1px solid #8d8284; border-radius: 18px; background: linear-gradient(100deg, rgba(20, 125, 30, .74), rgba(28, 170, 26, .76) 35%, rgba(46, 200, 40, .77) 65%, rgba(35, 130, 42, .75)); }
.subtitle svg { width: 100%; height: 100%; overflow: visible; }
.subtitle text { font: 500 41px "Noto Sans CJK JP", sans-serif; fill: #1c1613; stroke: #fff; stroke-width: 13px; stroke-linejoin: round; paint-order: stroke; }
.comp .panel-foot { height: 32px; padding-left: 13px; gap: 10px; }
.select.zoomlevel { width: 100px; height: 23px; font-size: 14px; }
.select.quality { width: 112px; height: 23px; }
.comp .lit { border-radius: 5px; width: 24px; margin: 0 3px; }
.icons .exposure { width: 34px; margin-right: 8px; color: #3a8ff0; }
.field.time { width: 87px; height: 23px; }

.side { display: grid; grid-template-rows: 176px 1fr; gap: 5px; min-width: 0; }
.side .tabs { padding-left: 15px; }
.side .tab { margin-right: 51px; }
.side .tab.current { margin-right: 30px; }
.side .info .current { margin-right: 27px; }
.info .ham { margin-left: 4px; }
.side .overflow { position: sticky; right: 0; width: 21px; background: #111; flex: none; }
.readout { display: flex; padding: 1px 10px; height: 75px; border-bottom: 2px solid #0a0a0a; }
.sample { width: 25px; height: 25px; background: #000; margin: 15px 6px 0 0; }
.readout dl { display: grid; grid-template-columns: 24px 1fr; grid-auto-rows: 17px; line-height: 17px; margin: 0; width: 100px; }
.readout dl:last-child { grid-template-columns: 20px 1fr; }
.readout dd { margin: 0; }
.cross { margin: 27px 4px 0 0; font-size: 20px; }
.playing { margin: 8px 9px; line-height: 17px; }

.timeline { height: 365px; border-top: 1px solid #2a62b8; border-bottom: 4px double #4a92b8; background: #111; display: flex; flex-direction: column; }
.timeline .tabs { height: 29px; gap: 48px; padding-left: 6px; }
.tabgroup { display: flex; height: 29px; border-bottom: 2px solid #ccc; color: #c8c8c8; }
.tabgroup .tab { height: 29px; padding: 2px 0 0; margin-left: 14px; }
.tabgroup .close { margin-right: 9px; }
.timeline .swatch { margin-top: 7px; }
.tl-body { flex: 1; display: grid; grid-template-columns: 825px 1fr 14px; min-height: 0; }
.layers { border-right: 2px solid #000; }
.controls { height: 46px; display: flex; align-items: flex-start; border-bottom: 1px solid #000; }
.clock { width: 129px; height: 44px; padding: 5px 0 0 5px; color: #1558a8; font: 14px/16px "Liberation Sans", sans-serif; white-space: nowrap; }
.clock strong { display: block; margin-left: 7px; color: #3a8ff0; font: 600 19px/22px "Noto Sans", sans-serif; }
.controls .search { flex: 1; margin-top: 10px; }
.controls .icons { margin: 12px 11px 0 10px; color: #a8a8a8; }
.controls .icons svg { width: 20px; height: 18px; }
.row { height: 24px; border-bottom: 1px solid #000; display: grid; align-items: center; grid-template-columns: 14px 20px 19px 19px 27px 25px 34px 1fr 152px 187px; font-size: 14px; color: #b0b0b0; }
.row > svg { width: 15px; height: 15px; justify-self: center; }
.row > svg.small { width: 10px; height: 10px; }
.row > .tag { justify-self: start; margin-left: -3px; }
.on { background: #050505; }
.row .box { width: 16px; height: 16px; background: #020202; justify-self: center; border-radius: 2px; }
.bar, .bar-left { border-left: 3px solid #070707; }
.bar { height: 14px; margin-left: 5px; }
.row .num { padding-left: 2px; font-family: "Liberation Sans", sans-serif; }
.head .num { line-height: 14px; margin-left: -6px; padding-left: 5px; }
.head .source { line-height: 14px; padding-left: 4px; margin-left: -3px; }
.head .parent { line-height: 14px; margin-left: 18px; padding-left: 6px; }
.layer { background: #262626; }
.label { width: 19px; height: 19px; }
.row .source { font-feature-settings: normal; }
.head .source { font-feature-settings: inherit; }
.layer .source { display: flex; align-items: center; gap: 9px; padding-left: 4px; font-family: "Liberation Sans", "Noto Sans CJK JP", sans-serif; white-space: nowrap; }
.source svg { width: 14px; height: 18px; }
.source .tee { width: 12px; height: 12px; margin: 0 1px; color: #888; }
.switches { display: grid; grid-template-columns: repeat(8, 19px); align-items: center; justify-items: center; }
.switches svg { width: 16px; height: 15px; }
.switches b { font: italic 16px/16px "Noto Sans", sans-serif; }
.layer .parent, .prop span { display: flex; align-items: center; }
.layer .parent { padding-left: 27px; gap: 7px; }
.parent > svg { width: 16px; height: 14px; color: #999; }
.layer .select { width: 113px; height: 20px; border: 0; }
.prop { grid-template-columns: 128px 47px 1fr 194px 144px; font-feature-settings: normal; }
.prop svg { width: 16px; height: 16px; }
.prop span:last-child svg { height: 14px; color: #999; }
.prop .keys { gap: 9px; padding-left: 2px; }
.prop .keys svg { width: 8px; height: 10px; }
.prop .keys .key { width: 12px; height: 12px; color: #3a8ff0; background: #000; outline: 3px solid #000; }
.watches { gap: 8px; justify-content: flex-end; padding-right: 7px; }
.watches .timed { color: #2d80dd; background: #000; }
.prop .value { color: #3a82d8; font: 13px/18px "Liberation Sans", sans-serif; }
.prop .value svg { width: 18px; height: 10px; margin-right: 4px; color: #a8a8a8; }
.value em { color: #a8a8a8; }

.graph { position: relative; overflow: hidden; display: flex; flex-direction: column; background: linear-gradient(90deg, #1b1b1b 0 90.800%, #111 0) 0 71px no-repeat; }
.navigator { display: flex; height: 12px; flex: none; margin: 9px 0 0 1px; background: #151515; }
.cap { width: 8px; background: #2d8cf5; }
.cap.start { border-radius: 5px 0 0 5px; margin-right: 1px; }
.cap.end { border-radius: 0 5px 5px 0; margin-left: 1px; }
.navigator .cap { height: 11px; }
.view { width: 15px; height: 11px; background: #606060; }
.ruler { display: flex; margin-left: -50px; height: 25px; flex: none; background: #111; font: 14px/14px "Liberation Sans", sans-serif; }
.ruler span { flex: 0 0 10.570%; text-align: center; white-space: nowrap; }
.ruler span::after { content: ""; display: block; width: 1px; height: 7px; margin: 4px auto 0; background: #999; }
.workarea { display: flex; height: 20px; flex: none; padding-left: 1px; background: #111; }
.area { width: 90%; background: #585858; border-top: 1px solid #707070; }
.cached { height: 4px; flex: none; margin-left: 10px; border-bottom: 1px solid #1a1a1a; background: #06991c; }
.tracks { flex: 1; position: relative; padding-left: 10px; }
.track { height: 24px; display: flex; align-items: center; margin-left: -10px; padding-left: 10px; border-bottom: 1px solid #050505; background: rgba(255, 255, 255, .07); }
.track.sub { background: none; position: relative; }
.clip { height: 20px; flex: none; }
.clip.red { background: #75302a; }
.clip.aqua { background: #687a79; }
.clip.last { border-top-right-radius: 6px; }
.clip.trimmed { background: #434b49; border: 1px solid #52605d; border-radius: 3px 0 0 3px; }
.sub svg { color: #b0b0b0; }
.sub .k1, .sub .ibeam { width: 10px; height: 12px; margin-left: -5px; }
.sub .k2 { width: 11px; height: 13px; margin-left: 107px; }
.redline { position: absolute; top: 0; bottom: 0; left: 25.400%; width: 3px; background: #bf1f12; }
.playhead { position: absolute; left: 10px; top: 27px; bottom: 0; border-left: 1px solid #4a88d0; }
.playhead svg { width: 14px; height: 17px; margin-left: -8px; }
.edge { padding-top: 49px; overflow: hidden; color: #b4b4b4; }
.edge svg { width: 10px; height: 18px; margin-left: 5px; }
.edge svg + svg { width: 14px; height: 16px; margin: 7px 0 0 1px; }

.tl-foot { height: 21px; display: grid; grid-template-columns: 825px 1fr; border-top: 1px solid #000; flex: none; font-size: 14px; color: #b0b0b0; }
.foot-left, .foot-right { display: flex; align-items: center; }
.foot-left { gap: 8px; }
.foot-left svg { width: 16px; height: 16px; }
.render { display: flex; gap: 5px; margin-left: 26px; width: 395px; }
.render em { color: #6a6a6a; }
.foot-right { padding-left: 8px; }
.foot-right svg { width: 22px; height: 15px; }
.foot-right .far { width: 14px; height: 8px; }
.foot-right input { appearance: none; width: 70px; height: 14px; margin: 0 9px 0 8px; background: linear-gradient(#444, #444) 0 6px / 52px 3px no-repeat; }
.foot-right input::-webkit-slider-thumb { appearance: none; width: 13px; height: 13px; border: 3px solid #aaa; border-radius: 50%; background: #111; }
.foot-right .thumb { width: 31px; height: 20px; margin-left: 5px; }
```
